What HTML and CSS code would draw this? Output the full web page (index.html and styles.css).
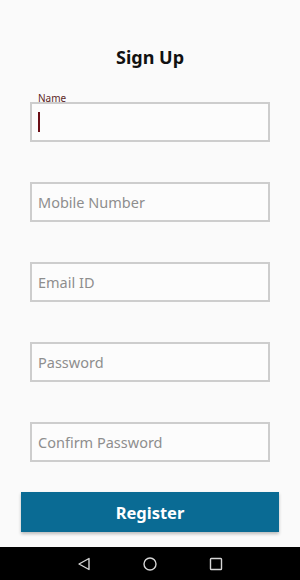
FILE: index.html
```html
<!DOCTYPE html>
<html lang="en">
<head>
    <meta charset="UTF-8">
    <meta name="viewport" content="width=device-width, initial-scale=1.0">
    <title>Sign Up</title>
    <link rel="stylesheet" href="styles.css">
</head>
<body>
    <div class="screen">
        <h1>Sign Up</h1>

        <form class="signup-form">
            <div class="field active">
                <label class="float-label" for="nameInput">Name</label>
                <input type="text" id="nameInput">
                <span class="caret"></span>
            </div>
            <div class="field">
                <input type="text" placeholder="Mobile Number">
            </div>
            <div class="field">
                <input type="text" placeholder="Email ID">
            </div>
            <div class="field">
                <input type="password" placeholder="Password">
            </div>
            <div class="field">
                <input type="password" placeholder="Confirm Password">
            </div>
            <button type="button" class="register-btn">Register</button>
        </form>
    </div>

    <div class="nav-bar">
        <svg width="14" height="14" viewBox="0 0 14 14">
            <path d="M12 1.5 L2 7 L12 12.5 Z" fill="none" stroke="#d6d6d6" stroke-width="1.4" stroke-linejoin="round"/>
        </svg>
        <svg width="14" height="14" viewBox="0 0 14 14">
            <circle cx="7" cy="7" r="6" fill="none" stroke="#d6d6d6" stroke-width="1.4"/>
        </svg>
        <svg width="14" height="14" viewBox="0 0 14 14">
            <rect x="1.5" y="1.5" width="11" height="11" rx="0.8" fill="none" stroke="#d6d6d6" stroke-width="1.4"/>
        </svg>
    </div>
</body>
</html>
```

FILE: styles.css
```css
body {
    margin: 0;
    background-color: #fafafa;
    font-family: "Noto Sans", "Open Sans", sans-serif;
}
.screen {
    height: 547px;
    box-sizing: border-box;
    padding: 45px 30px 0;
}
h1 {
    margin: 0;
    font-size: 18px;
    line-height: 24px;
    font-weight: bold;
    color: #111;
    text-align: center;
}
.signup-form {
    display: flex;
    flex-direction: column;
    gap: 40px;
    margin-top: 33px;
}
.field {
    position: relative;
}
.field input {
    display: block;
    width: 100%;
    height: 40px;
    box-sizing: border-box;
    border: 2px solid #cdcdcd;
    background-color: #fcfcfc;
    padding: 0 6px;
    font-family: inherit;
    font-size: 14.5px;
    color: #333;
    outline: none;
}
.field input::placeholder {
    color: #8e8e8e;
}
.float-label {
    position: absolute;
    left: 8px;
    top: -10px;
    font-size: 10px;
    line-height: 12px;
    color: #5c1f26;
}
.caret {
    position: absolute;
    left: 8px;
    top: 10px;
    width: 2px;
    height: 20px;
    background-color: #6a0e16;
}
.register-btn {
    margin: -10px -9px 0;
    height: 40px;
    border: none;
    background-color: #0a6b94;
    color: white;
    font-family: inherit;
    font-size: 16.5px;
    font-weight: bold;
    box-shadow: 0 2px 3px rgba(0,0,0,0.25);
    cursor: pointer;
}
.nav-bar {
    height: 33px;
    background-color: #000;
    display: flex;
    align-items: center;
    justify-content: center;
    gap: 52px;
}
```
